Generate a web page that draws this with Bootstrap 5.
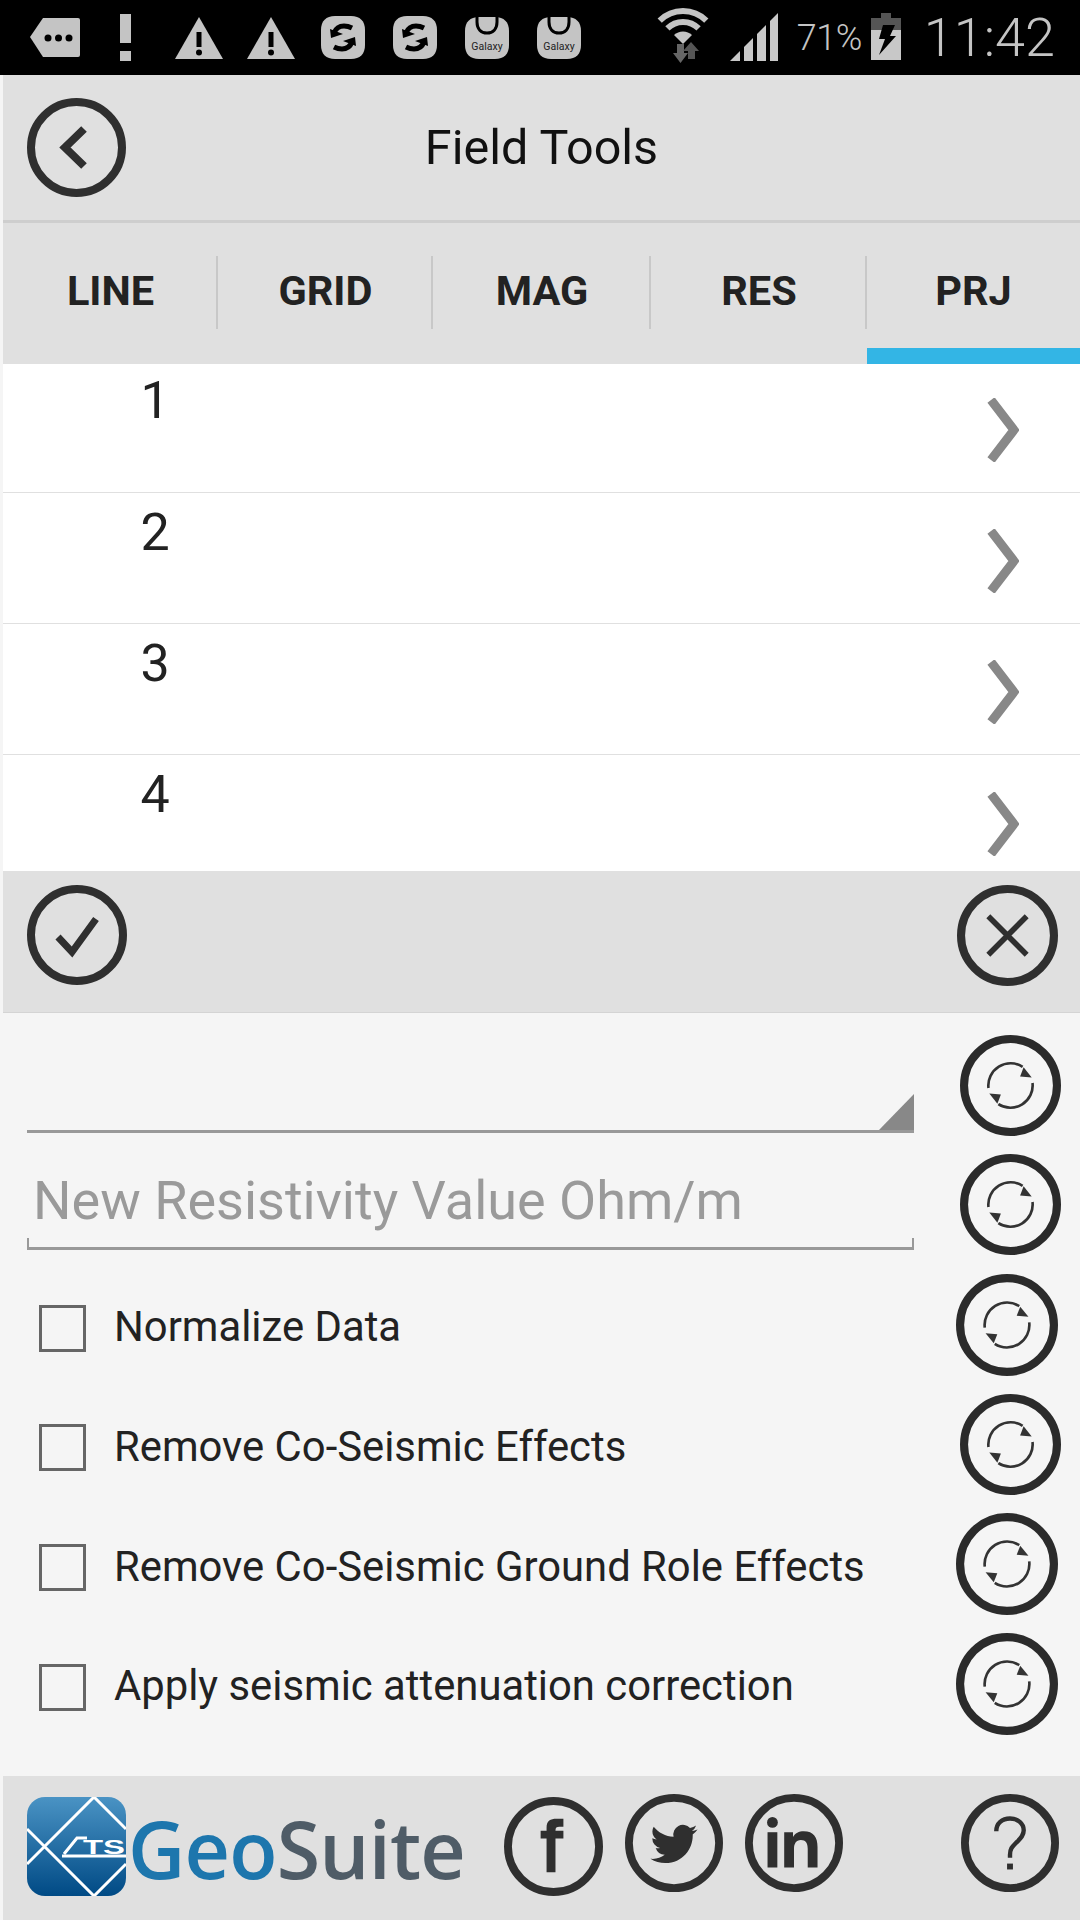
<!DOCTYPE html>
<html lang="en">
<head>
<meta charset="utf-8">
<title>Field Tools</title>
<link rel="stylesheet" href="https://cdn.jsdelivr.net/npm/bootstrap@5.3.0/dist/css/bootstrap.min.css">
<style>
html,body{margin:0;width:1080px;height:1920px;overflow:hidden;background:#f5f5f5;font-family:Roboto,"Liberation Sans",sans-serif;color:#222}
svg{display:block;flex:none}
.status-strip{height:75px;background:#000;padding-left:19px}
.status-slot{width:72px;height:75px}
.status-pct{font-size:36px;font-weight:300;color:#c4c4c4;width:64px;margin:0 10px 0 19px;line-height:1;white-space:nowrap;letter-spacing:-.5px}
.status-time{font-size:54px;font-weight:300;color:#c4c4c4;line-height:1;margin:0 25px 0 23px;white-space:nowrap}
.wifi-ico{margin-right:21px}
.app-shell{margin-left:3px;height:1845px}
.head-bar{height:148px;background:#e0e0e0;border-bottom:3px solid #cecece}
.ring-back{margin-left:24px}
.head-title{font-size:48.5px;padding:2px 123px 0 0;color:#111;line-height:1}
.tab-strip{height:141px;background:#e0e0e0;flex-wrap:nowrap}
.tab-cell{flex:0 0 auto;width:215px;height:141px;padding:46px 0 0;text-align:center;font-size:41.5px;font-weight:700;line-height:44px;color:#222;background-image:linear-gradient(#c8c8c8,#c8c8c8);background-repeat:no-repeat;background-size:2px 73px;background-position:right 33px}
.tab-cell:nth-child(3){width:218px}
.tab-cell:nth-child(4){width:216px}
.tab-cell.tab-last{width:213px;background-image:none;border-bottom:16px solid #33b5e5}
.row-list{height:507px;overflow:hidden;background:#fff;border-radius:0;flex:none}
.row-item{flex:none;height:131px;padding:0 61px 0 0;border:0;border-bottom:2px solid #e0e0e0;border-radius:0;background:#fff}
.row-item:first-child{height:129px}
.row-num{text-align:center;width:94px;font-size:52px;line-height:76px;color:#222;margin:2px 0 0 105px}
.row-item:first-child .row-num{margin-top:-1px}
.row-chev{margin-top:6px}
.row-item:first-child .row-chev{margin-top:4px}
.action-bar{height:142px;background:#e0e0e0;padding:14px 22px 0 24px;border-bottom:1px solid #d4d4d4}
.form-pane{height:763px;background:#f5f5f5;padding-top:12.5px}
.form-row{height:119.67px;padding-left:24px}
.left-col{width:887px}
.pick-line{height:39px;border-bottom:3px solid #999;margin-top:68px}
.plain-input{height:62px;background:transparent;border:0;border-radius:0;padding:0 0 14px 6px;font-size:54px;line-height:48px;color:#222;box-shadow:none}
.plain-input::placeholder{color:#9a9a9a;opacity:1}
.plain-input:focus{background:transparent;box-shadow:none}
.tick-line{height:12px;border:solid #999;border-width:0 2px 3px 2px}
.input-wrap{margin-top:31px}
.check-row{margin:0;padding:7px 0 0 12px;min-height:0;gap:28px}
.check-box.form-check-input{width:47px;height:47px;margin:0;float:none;background-color:transparent;border:3.5px solid #666;border-radius:0;box-shadow:none}
.check-text{font-size:41.8px;color:#222;line-height:1;white-space:nowrap;margin-top:-2px}
.ring-a{margin-right:19px}
.ring-b{margin-right:22px}
.foot-bar{height:144px;background:#e0e0e0;padding:18px 0 0 24px}
.brand-mark{margin-top:3px}
.brand-word{font-family:"Open Sans","Liberation Sans",sans-serif;font-size:79px;font-weight:600;line-height:1;margin:15px 0 0 2px;letter-spacing:-.8px;width:376px;white-space:nowrap}
.geo-part{color:#1d76ad}
.suite-part{color:#4f5c67}
.ring-fb{margin-top:3px}
.ring-tw{margin-left:22px}
.ring-in{margin-left:22px}
.ring-help{margin-left:118px}
</style>
</head>
<body>
<svg width="0" height="0" style="position:absolute">
  <defs>
    <symbol id="ring" viewBox="0 0 100 100"><circle cx="50" cy="50" r="46" fill="none" stroke="#2f2f2f" stroke-width="8"/></symbol>
    <symbol id="ring-sync" viewBox="0 0 100 100">
      <circle cx="50" cy="50" r="46" fill="none" stroke="#2b2b2b" stroke-width="8"/>
      <path d="M28.200 52.500A22 22 0 0 1 62 31.500" fill="none" stroke="#333" stroke-width="2.600"/>
      <path d="M71.800 47.500A22 22 0 0 1 38 68.500" fill="none" stroke="#333" stroke-width="2.600"/>
      <path d="M63 32l8 10-11.500-1z" fill="#333"/>
      <path d="M37 68l-8-10 11.500 1z" fill="#333"/>
    </symbol>
    <symbol id="sq-sync" viewBox="0 0 72 75">
      <path d="M28 16c-9 0-14 5-14 14v15c0 9 5 14 14 14h16c9 0 14-5 14-14V30c0-9-5-14-14-14z" fill="#c4c4c4"/>
      <path d="M27 33c2-5 5-7 10-7 3 0 6 1 8 2" fill="none" stroke="#000" stroke-width="5"/>
      <path d="M45 42c-2 5-5 7-10 7-3 0-6-1-8-2" fill="none" stroke="#000" stroke-width="5"/>
      <path d="M23 29l13 5-12 4zM49 46l-13-5 12-4z" fill="#000"/>
    </symbol>
    <symbol id="sq-galaxy" viewBox="0 0 72 75">
      <path d="M28 17c-9 0-14 5-14 14v14c0 9 5 14 14 14h16c9 0 14-5 14-14V31c0-9-5-14-14-14z" fill="#c4c4c4"/>
      <path d="M26 16v6c0 7 4 11 10 11s10-4 10-11v-6" fill="none" stroke="#000" stroke-width="3"/>
      <text x="36" y="50" text-anchor="middle" font-family="Roboto,sans-serif" font-size="10.500" fill="#222">Galaxy</text>
    </symbol>
    <symbol id="warn" viewBox="0 0 72 75">
      <path d="M36 17L60 59H12z" fill="#c4c4c4"/>
      <rect x="33.500" y="32" width="5" height="15" fill="#000"/><circle cx="36" cy="52.500" r="3" fill="#000"/>
    </symbol>
    <linearGradient id="logo-grad" x1="0" y1="0" x2="0" y2="1"><stop offset="0" stop-color="#4a93c4"/><stop offset="1" stop-color="#004a85"/></linearGradient>
  </defs>
</svg>

<div class="status-strip d-flex align-items-center">
  <svg class="status-slot" viewBox="0 0 72 75"><path d="M11 37L24 18H59a2 2 0 0 1 2 2V55a2 2 0 0 1-2 2H24z" fill="#c4c4c4"/><circle cx="29" cy="38" r="3.500"/><circle cx="39.500" cy="38" r="3.500"/><circle cx="50" cy="38" r="3.500"/></svg>
  <svg class="status-slot" viewBox="0 0 72 75"><rect x="29" y="14" width="11" height="29" fill="#c4c4c4"/><rect x="29" y="51" width="11" height="10" fill="#c4c4c4"/></svg>
  <svg class="status-slot"><use href="#warn"/></svg>
  <svg class="status-slot"><use href="#warn"/></svg>
  <svg class="status-slot"><use href="#sq-sync"/></svg>
  <svg class="status-slot"><use href="#sq-sync"/></svg>
  <svg class="status-slot"><use href="#sq-galaxy"/></svg>
  <svg class="status-slot"><use href="#sq-galaxy"/></svg>
  <div class="ms-auto d-flex align-items-center">
    <svg class="wifi-ico" width="52" height="75" viewBox="0 0 52 75">
      <path d="M2.700 20.700A33 33 0 0 1 49.300 20.700" fill="none" stroke="#c4c4c4" stroke-width="6"/>
      <path d="M10.400 28.400A22 22 0 0 1 41.600 28.400" fill="none" stroke="#c4c4c4" stroke-width="6"/>
      <path d="M17 35A13 13 0 0 1 35 35L26 44z" fill="#c4c4c4"/>
      <path d="M20 44h7v9h4l-7.500 10L16 53h4z" fill="#666"/>
      <path d="M31 59v-8h-5l8-9 8 9h-4v8z" fill="#555"/>
    </svg>
    <svg width="48" height="75" viewBox="0 0 48 75" fill="#c8c8c8"><path d="M0 61L10 51V61z"/><path d="M14 47l9-9V61H14z"/><path d="M27 34l9-9V61H27z"/><path d="M40 21l8-8V61H40z"/></svg>
    <span class="status-pct">71%</span>
    <svg width="30" height="75" viewBox="0 0 30 75">
      <rect x="10" y="13" width="10" height="5" fill="#555"/>
      <rect x="0" y="18" width="30" height="12" fill="#555"/>
      <rect x="0" y="30" width="30" height="30" fill="#c8c8c8"/>
      <path d="M12 25H24L19 36H25L8 55 14 39H8z" fill="#000"/>
    </svg>
    <span class="status-time">11:42</span>
  </div>
</div>

<main class="app-shell d-flex flex-column">
  <header class="head-bar d-flex align-items-center">
    <svg class="ring-back" width="99" height="99" viewBox="0 0 99 99"><circle cx="49.500" cy="49.500" r="45.500" fill="none" stroke="#2f2f2f" stroke-width="8"/><path d="M57 31L38 49.500 57 68" fill="none" stroke="#2f2f2f" stroke-width="8"/></svg>
    <h1 class="head-title flex-grow-1 text-center fw-normal m-0">Field Tools</h1>
  </header>

  <nav class="nav tab-strip">
    <a class="nav-link tab-cell">LINE</a>
    <a class="nav-link tab-cell">GRID</a>
    <a class="nav-link tab-cell">MAG</a>
    <a class="nav-link tab-cell">RES</a>
    <a class="nav-link tab-cell tab-last active">PRJ</a>
  </nav>

  <ul class="list-group list-group-flush row-list">
    <li class="list-group-item row-item d-flex justify-content-between align-items-center">
      <span class="row-num align-self-start">1</span>
      <svg class="row-chev" width="32" height="64" viewBox="0 0 32 64"><path d="M4 2L27 32 4 62" fill="none" stroke="#888" stroke-width="9"/></svg>
    </li>
    <li class="list-group-item row-item d-flex justify-content-between align-items-center">
      <span class="row-num align-self-start">2</span>
      <svg class="row-chev" width="32" height="64" viewBox="0 0 32 64"><path d="M4 2L27 32 4 62" fill="none" stroke="#888" stroke-width="9"/></svg>
    </li>
    <li class="list-group-item row-item d-flex justify-content-between align-items-center">
      <span class="row-num align-self-start">3</span>
      <svg class="row-chev" width="32" height="64" viewBox="0 0 32 64"><path d="M4 2L27 32 4 62" fill="none" stroke="#888" stroke-width="9"/></svg>
    </li>
    <li class="list-group-item row-item d-flex justify-content-between align-items-center">
      <span class="row-num align-self-start">4</span>
      <svg class="row-chev" width="32" height="64" viewBox="0 0 32 64"><path d="M4 2L27 32 4 62" fill="none" stroke="#888" stroke-width="9"/></svg>
    </li>
  </ul>

  <div class="action-bar d-flex justify-content-between align-items-start">
    <svg width="100" height="100" viewBox="0 0 100 100"><use href="#ring"/><path d="M31 52L45 67 69 34" fill="none" stroke="#2f2f2f" stroke-width="7"/></svg>
    <svg width="101" height="101" viewBox="0 0 100 100"><use href="#ring"/><path d="M31 31L69 69M69 31L31 69" fill="none" stroke="#2f2f2f" stroke-width="5.500"/></svg>
  </div>

  <form class="form-pane" onsubmit="return false">
    <div class="form-row d-flex justify-content-between align-items-center">
      <div class="left-col align-self-start">
        <div class="pick-line d-flex justify-content-end"><svg width="35" height="36" viewBox="0 0 35 36"><path d="M35 0V36H0z" fill="#888"/></svg></div>
      </div>
      <svg class="ring-a" width="101" height="101"><use href="#ring-sync"/></svg>
    </div>
    <div class="form-row d-flex justify-content-between align-items-center">
      <div class="left-col align-self-start input-wrap">
        <input class="form-control plain-input" type="text" placeholder="New Resistivity Value Ohm/m">
        <div class="tick-line"></div>
      </div>
      <svg class="ring-a" width="101" height="101"><use href="#ring-sync"/></svg>
    </div>
    <div class="form-row d-flex justify-content-between align-items-center">
      <label class="form-check check-row d-flex align-items-center"><input class="form-check-input check-box" type="checkbox"><span class="form-check-label check-text">Normalize Data</span></label>
      <svg class="ring-b" width="102" height="102"><use href="#ring-sync"/></svg>
    </div>
    <div class="form-row d-flex justify-content-between align-items-center">
      <label class="form-check check-row d-flex align-items-center"><input class="form-check-input check-box" type="checkbox"><span class="form-check-label check-text">Remove Co-Seismic Effects</span></label>
      <svg class="ring-a" width="101" height="101"><use href="#ring-sync"/></svg>
    </div>
    <div class="form-row d-flex justify-content-between align-items-center">
      <label class="form-check check-row d-flex align-items-center"><input class="form-check-input check-box" type="checkbox"><span class="form-check-label check-text">Remove Co-Seismic Ground Role Effects</span></label>
      <svg class="ring-b" width="102" height="102"><use href="#ring-sync"/></svg>
    </div>
    <div class="form-row d-flex justify-content-between align-items-center">
      <label class="form-check check-row d-flex align-items-center"><input class="form-check-input check-box" type="checkbox"><span class="form-check-label check-text">Apply seismic attenuation correction</span></label>
      <svg class="ring-b" width="102" height="102"><use href="#ring-sync"/></svg>
    </div>
  </form>

  <footer class="foot-bar d-flex align-items-start">
    <svg class="brand-mark" width="99" height="99" viewBox="0 0 99 99">
      <clipPath id="logo-clip"><rect width="99" height="99" rx="18"/></clipPath>
      <g clip-path="url(#logo-clip)">
        <rect width="99" height="99" fill="url(#logo-grad)"/>
        <path d="M67 0L0 67M67 99L0 32M67 0L99 32M67 99L99 67" fill="none" stroke="#fff" stroke-width="3"/>
        <path d="M35 59H99" stroke="#fff" stroke-width="3"/>
        <path d="M37 57L50 41H60" fill="none" stroke="#fff" stroke-width="3"/>
        <text x="56" y="56.500" font-family="Liberation Sans,sans-serif" font-size="21" font-weight="700" fill="#fff" textLength="42" lengthAdjust="spacingAndGlyphs">TS</text>
      </g>
    </svg>
    <div class="brand-word"><span class="geo-part">Geo</span><span class="suite-part">Suite</span></div>
    <svg class="ring-fb" width="99" height="99" viewBox="0 0 100 100"><use href="#ring"/><path d="M43 76V42H37V34H43V31C43 24 47 22 53 22H60V30H56C53 30 52 31 52 34V34H60V42H52V76z" fill="#2f2f2f"/></svg>
    <svg class="ring-tw" width="98" height="98" viewBox="0 0 100 100"><use href="#ring"/><g transform="translate(26 27) scale(2)"><path d="M23.953 4.570a10 10 0 0 1-2.825.775 4.958 4.958 0 0 0 2.163-2.723c-.951.555-2.005.959-3.127 1.184a4.920 4.920 0 0 0-8.384 4.482C7.690 8.095 4.067 6.130 1.640 3.162a4.822 4.822 0 0 0-.666 2.475c0 1.710.870 3.213 2.188 4.096a4.904 4.904 0 0 1-2.228-.616v.060a4.923 4.923 0 0 0 3.946 4.827 4.996 4.996 0 0 1-2.212.085 4.936 4.936 0 0 0 4.604 3.417 9.867 9.867 0 0 1-6.102 2.105c-.390 0-.779-.023-1.170-.067a13.995 13.995 0 0 0 7.557 2.209c9.053 0 13.998-7.496 13.998-13.985 0-.210 0-.420-.015-.630A9.935 9.935 0 0 0 24 4.590z" fill="#2f2f2f"/></g></svg>
    <svg class="ring-in" width="98" height="98" viewBox="0 0 100 100"><use href="#ring"/><circle cx="28" cy="29" r="5.500" fill="#2f2f2f"/><rect x="23" y="39" width="10" height="36" fill="#2f2f2f"/><path d="M40 39H49V44C51 40 55 38 60 38 70 38 74 44 74 54V75H64V56C64 50 62 47 57 47 52 47 50 51 50 56V75H40z" fill="#2f2f2f"/></svg>
    <svg class="ring-help" width="98" height="98" viewBox="0 0 100 100"><use href="#ring"/><path d="M36 38C36 30 42 25 50 25 58 25 64 30 64 37 64 43 60 46 56 50 52 54 50 56 50 62V65" fill="none" stroke="#2f2f2f" stroke-width="4.500"/><rect x="47" y="71" width="6" height="6" fill="#2f2f2f"/></svg>
  </footer>
</main>
</body>
</html>
